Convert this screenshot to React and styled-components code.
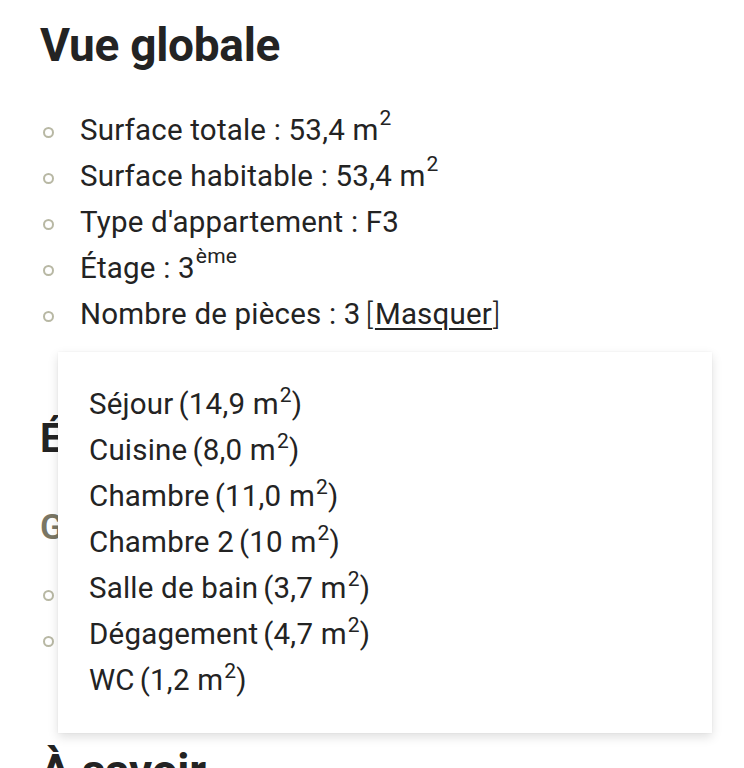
import React from "react";
import styled, { createGlobalStyle } from "styled-components";

const Global = createGlobalStyle`
  html, body { margin: 0; padding: 0; background: #ffffff; }
  body { font-family: Roboto, "Liberation Sans", sans-serif; color: #232323; }
`;

const Page = styled.div`
  position: relative;
  padding: 18px 40px 0 40px;
  height: 768px;
  overflow: hidden;
  box-sizing: border-box;
`;

const Title = styled.h2`
  margin: ${(p) => p.$m || "0"};
  font-size: ${(p) => p.$size || 46}px;
  line-height: 55px;
  font-weight: 700;
  letter-spacing: -0.3px;
  color: #232323;
`;

const SubTitle = styled.h3`
  margin: ${(p) => p.$m || "0"};
  font-size: 35px;
  line-height: 44px;
  font-weight: 600;
  color: #7a7664;
`;

const List = styled.ul`
  list-style: none;
  margin: ${(p) => p.$m || "0"};
  padding: 0;
`;

const Item = styled.li`
  display: flex;
  align-items: center;
  font-size: 29.5px;
  line-height: 46px;
  font-weight: 400;
  letter-spacing: 0.2px;
  white-space: nowrap;
  &::before {
    content: "";
    flex: none;
    width: 7px;
    height: 7px;
    border: 2px solid #b8b8a4;
    border-radius: 50%;
    margin: 0 26px 0 3px;
    position: relative;
    top: 2px;
  }
`;

const Sup = styled.sup`
  font-size: 21px;
  line-height: 0;
  vertical-align: 0;
  position: relative;
  top: -12px;
  margin-left: 1px;
`;

const Link = styled.a`
  color: #232323;
  text-decoration: underline;
  text-decoration-thickness: 1.5px;
  text-underline-offset: 4px;
  cursor: pointer;
`;

const Bracket = styled.span`
  font-weight: 300;
  margin-left: ${(p) => (p.$open ? 5 : 1)}px;
  margin-right: ${(p) => (p.$open ? 2 : 0)}px;
`;

const Popup = styled.div`
  position: absolute;
  left: 58px;
  top: 352px;
  width: 654px;
  box-sizing: border-box;
  padding: 29px 31px 30px;
  background: #ffffff;
  box-shadow: 0 4px 10px rgba(0, 0, 0, 0.13), 0 0 2px rgba(0, 0, 0, 0.05);
  z-index: 2;
`;

const Room = styled.div`
  font-size: 29.5px;
  line-height: 46px;
  letter-spacing: 0.2px;
  white-space: nowrap;
  color: #232323;
`;

const Area = styled.span`
  margin-left: 5px;
`;

const m2 = (
  <>
    m<Sup>2</Sup>
  </>
);

const rooms = [
  ["Séjour", "14,9"],
  ["Cuisine", "8,0"],
  ["Chambre", "11,0"],
  ["Chambre 2", "10"],
  ["Salle de bain", "3,7"],
  ["Dégagement", "4,7"],
  ["WC", "1,2"],
];

export default function App() {
  return (
    <>
      <Global />
      <Page>
        <Title>Vue globale</Title>
        <List $m="34px 0 0 0">
          <Item>Surface totale : 53,4 {m2}</Item>
          <Item>Surface habitable : 53,4 {m2}</Item>
          <Item>Type d'appartement : F3</Item>
          <Item>
            Étage : 3<Sup>ème</Sup>
          </Item>
          <Item>
            Nombre de pièces : 3
            <Bracket $open>[</Bracket>
            <Link>Masquer</Link>
            <Bracket>]</Bracket>
          </Item>
        </List>
        <Title $m="74px 0 0 0" $size={40}>Équipements</Title>
        <SubTitle $m="40px 0 0 0">Général</SubTitle>
        <List $m="20px 0 0 0">
          <Item>Ascenseur</Item>
          <Item>Interphone</Item>
        </List>
        <Title $m="82px 0 0 0">À savoir</Title>
        <Popup>
          {rooms.map(([name, v]) => (
            <Room key={name}>
              {name}
              <Area>
                ({v} {m2})
              </Area>
            </Room>
          ))}
        </Popup>
      </Page>
    </>
  );
}
